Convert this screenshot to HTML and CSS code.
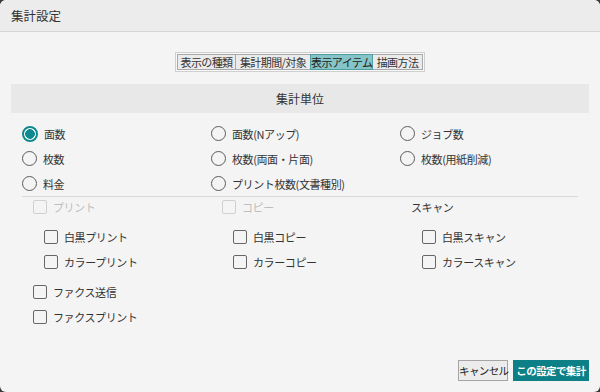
FILE: index.html
```html
<!DOCTYPE html>
<html lang="ja">
<head>
    <meta charset="UTF-8">
    <title>集計設定</title>
    <link rel="stylesheet" href="styles.css">
</head>
<body>
    <div class="dialog">
        <div class="titlebar">集計設定</div>

        <div class="content">
            <div class="tabs">
                <div class="tab tab-kind">表示の種類</div>
                <div class="tab tab-period">集計期間/対象</div>
                <div class="tab tab-item active">表示アイテム</div>
                <div class="tab tab-draw">描画方法</div>
            </div>

            <div class="section-head">集計単位</div>

            <div class="options">
                <div class="radio-grid">
                    <label class="opt"><span class="radio checked"></span>面数</label>
                    <label class="opt"><span class="radio"></span>面数(Nアップ)</label>
                    <label class="opt"><span class="radio"></span>ジョブ数</label>
                    <label class="opt"><span class="radio"></span>枚数</label>
                    <label class="opt"><span class="radio"></span>枚数(両面・片面)</label>
                    <label class="opt"><span class="radio"></span>枚数(用紙削減)</label>
                    <label class="opt"><span class="radio"></span>料金</label>
                    <label class="opt"><span class="radio"></span>プリント枚数(文書種別)</label>
                </div>

                <div class="categories">
                    <div class="category">
                        <div class="cat-head disabled"><span class="check"></span>プリント</div>
                        <div class="sub-list">
                            <div class="chk"><span class="check"></span>白黒プリント</div>
                            <div class="chk"><span class="check"></span>カラープリント</div>
                        </div>
                    </div>
                    <div class="category">
                        <div class="cat-head disabled"><span class="check"></span>コピー</div>
                        <div class="sub-list">
                            <div class="chk"><span class="check"></span>白黒コピー</div>
                            <div class="chk"><span class="check"></span>カラーコピー</div>
                        </div>
                    </div>
                    <div class="category">
                        <div class="cat-head">スキャン</div>
                        <div class="sub-list">
                            <div class="chk"><span class="check"></span>白黒スキャン</div>
                            <div class="chk"><span class="check"></span>カラースキャン</div>
                        </div>
                    </div>
                </div>

                <div class="fax-list">
                    <div class="chk"><span class="check"></span>ファクス送信</div>
                    <div class="chk"><span class="check"></span>ファクスプリント</div>
                </div>
            </div>
        </div>

        <div class="footer">
            <button class="btn btn-cancel">キャンセル</button>
            <button class="btn primary">この設定で集計</button>
        </div>
    </div>
</body>
</html>
```

FILE: styles.css
```css
html {
    background-color: #3a3a3a;
}

body {
    margin: 0;
    font-family: "Noto Sans CJK JP", "Noto Sans", sans-serif;
    font-size: 11px;
    letter-spacing: -0.4px;
    color: #333;
}

.dialog {
    width: 600px;
    height: 392px;
    background-color: #f4f4f4;
    border-radius: 6px;
    overflow: hidden;
    display: flex;
    flex-direction: column;
}

.titlebar {
    height: 31px;
    line-height: 31px;
    padding-left: 11px;
    background-color: #ececec;
    border-bottom: 1px solid #d6d6d6;
    font-size: 12.5px;
    letter-spacing: 0;
}

.content {
    flex: 1;
    padding: 0 11px;
}

/* タブ */
.tabs {
    display: flex;
    width: max-content;
    margin: 20px auto 0;
    padding: 1px;
    border: 1px solid #cfcfcf;
    background-color: #f8f8f8;
}

.tab {
    height: 14px;
    line-height: 14px;
    text-align: center;
    font-size: 11px;
    letter-spacing: -0.6px;
    background-color: #ebebeb;
    border: 1px solid #a9a9a9;
    margin-left: -1px;
    white-space: nowrap;
}

.tab:first-child {
    margin-left: 0;
}

.tab-kind { width: 57px; }
.tab-period { width: 74px; }
.tab-item { width: 61px; }
.tab-draw { width: 49px; }

.tab.active {
    background-color: #85c4c7;
    border-color: #4f9da2;
    color: #222;
    position: relative;
}

.section-head {
    margin-top: 12px;
    height: 29px;
    line-height: 29px;
    text-align: center;
    background-color: #e8e8e8;
    font-size: 12px;
    letter-spacing: 0;
}

.options {
    margin: 8px 11px 0;
}

.radio-grid {
    display: grid;
    grid-template-columns: 189px 189px 1fr;
    grid-auto-rows: 25px;
}

.opt, .chk, .cat-head {
    display: flex;
    align-items: center;
    white-space: nowrap;
}

.radio {
    width: 13px;
    height: 13px;
    border: 1.6px solid #5c5c5c;
    border-radius: 50%;
    margin-right: 6px;
    flex-shrink: 0;
}

.radio.checked {
    border: 2px solid #0d8a8f;
    width: 12px;
    height: 12px;
    background: radial-gradient(circle, #0d8a8f 0 4.6px, #fff 5px);
}

.check {
    width: 12px;
    height: 12px;
    border: 1.5px solid #666;
    border-radius: 2px;
    margin-right: 6px;
    flex-shrink: 0;
}

.categories {
    display: grid;
    grid-template-columns: 189px 189px 1fr;
    border-top: 1px solid #d7d7d7;
}

.category {
    padding-left: 11px;
}

.cat-head {
    height: 19px;
}

.cat-head.disabled {
    color: #bdbdbd;
}

.cat-head.disabled .check {
    border-color: #d0d0d0;
}

.sub-list {
    margin-top: 8px;
    padding-left: 11px;
}

.chk {
    height: 25px;
}

.fax-list {
    margin-top: 5px;
    padding-left: 11px;
}

/* ボタン */
.footer {
    display: flex;
    justify-content: flex-end;
    gap: 5px;
    padding: 0 11px 11px;
}

.btn {
    height: 21px;
    padding: 0;
    font-family: inherit;
    font-size: 10.5px;
    letter-spacing: -0.6px;
    color: #222;
    background-color: #ececec;
    border: 1px solid #a5a5a5;
    border-radius: 0;
    white-space: nowrap;
}

.btn-cancel {
    width: 50px;
}

.btn.primary {
    width: 76px;
    background-color: #0c7f87;
    border-color: #0c7f87;
    color: #fff;
    font-weight: bold;
}
```
